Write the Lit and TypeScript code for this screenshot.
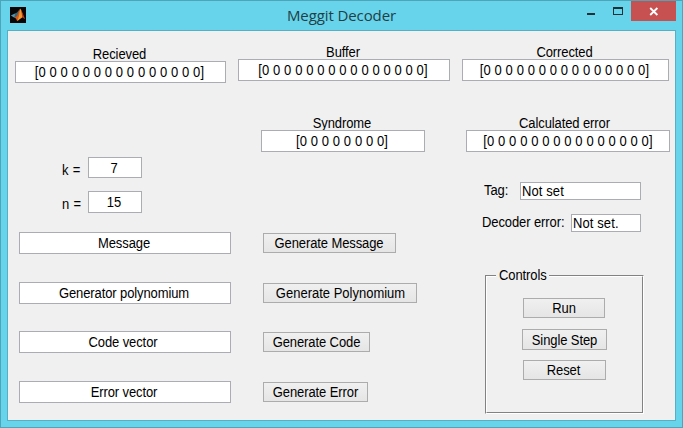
import { LitElement, html, css } from "lit";
import { customElement } from "lit/decorators.js";

const zeros = (n: number) => `[${Array(n).fill("0").join(" ")}]`;
const text = (t: string) => html`<span class="t">${t}</span>`;

@customElement("app-root")
export class AppRoot extends LitElement {
  static styles = css`
    * { box-sizing: border-box; }
    :host {
      box-sizing: border-box;
      display: flex;
      flex-direction: column;
      width: 683px;
      height: 428px;
      border: 1px solid #4fa5b8;
      background: #67d4eb;
      font: 13px/16px "Liberation Sans", Arial, sans-serif;
      letter-spacing: -0.1px;
      color: #000;
      overflow: hidden;
    }
    .t {
      display: inline-block;
      white-space: pre;
      transform: translate(-1px, 1px) scaleY(1.08);
      transform-origin: 50% 12px;
    }
    .titlebar {
      display: grid;
      grid-template-columns: 120px 1fr 120px;
      height: 29px;
      flex: none;
    }
    .logo { margin: 6px 0 0 9px; width: 16px; height: 16px; display: block; }
    .title {
      text-align: center;
      font: 15px/20px "Open Sans", "Noto Sans", sans-serif;
      letter-spacing: -0.1px;
      color: #223f46;
      padding-top: 4px;
    }
    .caption { display: flex; justify-content: flex-end; padding-right: 6px; }
    .caption svg { display: block; flex: none; }
    .client {
      display: flex;
      width: 669px;
      height: 391px;
      margin-left: 6px;
      flex: none;
      border: 1px solid #55b0c3;
      background: #f0f0f0;
    }
    .col { display: flex; flex-direction: column; align-items: flex-start; flex: none; }
    .left { width: 230px; padding: 15px 0 0 7px; }
    .middle { width: 223px; padding-top: 13px; }
    .right { width: 214px; padding: 13px 0 0 1px; }
    .edit {
      display: flex;
      justify-content: center;
      align-items: center;
      height: 22px;
      background: #fff;
      border: 1px solid #abadb3;
      white-space: pre;
      flex: none;
    }
    .bits { letter-spacing: 0.1px; }
    .label { height: 15px; text-align: center; white-space: pre; overflow: hidden; }
    .w211 { width: 211px; }
    .w212 { width: 212px; }
    .w207 { width: 207px; }
    .w204 { width: 204px; }
    .w164 { width: 164px; }
    .w199 { width: 199px; }
    .w54 { width: 54px; }
    .param { display: flex; margin-left: 47px; }
    .param .name { width: 26px; padding: 5px 0 0 1px; white-space: pre; letter-spacing: 0.3px; }
    .k { margin-top: 74px; }
    .k .edit { height: 21px; }
    .n { margin-top: 13px; }
    .vectors { display: flex; flex-direction: column; margin: 19px 0 0 4px; }
    .vectors .edit:nth-child(2) { margin-top: 28px; }
    .vectors .edit:nth-child(3) { margin-top: 27px; padding-right: 2px; }
    .vectors .edit:nth-child(4) { margin-top: 28px; }
    .syndrome { margin: 34px 0 0 23px; }
    .calculated { margin: 34px 0 0 4px; }
    .calculated .edit { padding-left: 2px; }
    button {
      display: flex;
      align-items: center;
      justify-content: center;
      height: 20px;
      padding: 0 0 0 1px;
      margin: 0;
      border: 1px solid #acacac;
      border-radius: 0;
      background: linear-gradient(#f0f0f0, #e5e5e5);
      font: inherit;
      letter-spacing: inherit;
      color: inherit;
      white-space: pre;
    }
    .generators { display: flex; flex-direction: column; margin: 80px 0 0 25px; }
    .gm { width: 133px; margin-top: 1px; }
    .gp { width: 154px; margin-top: 30px; padding-left: 3px; letter-spacing: 0; }
    .gc { width: 107px; margin-top: 29px; padding-left: 2px; }
    .ge { width: 105px; margin-top: 30px; padding-left: 2px; }
    .status { display: flex; justify-content: space-between; }
    .status .edit { height: 18px; justify-content: flex-start; padding-left: 2px; }
    .status .edit .t { letter-spacing: 0.1px; }
    .tag { width: 158px; margin: 30px 0 0 21px; padding-left: 2px; }
    .tag .edit { width: 121px; }
    .error { width: 160px; margin: 14px 0 0 19px; padding-left: 2px; }
    .error .edit { width: 70px; }
    .panel {
      display: flex;
      flex-direction: column;
      width: 159px;
      height: 139px;
      margin: 43px 0 0 23px;
      border: 1px solid #828282;
      border-right-color: #fff;
      border-bottom-color: #fff;
    }
    .inner {
      display: flex;
      flex-direction: column;
      align-items: flex-start;
      flex: 1;
      border: 1px solid #fff;
      border-right-color: #828282;
      border-bottom-color: #828282;
    }
    .legend {
      height: 16px;
      width: 53px;
      margin: -10px 0 0 9px;
      padding-left: 4px;
      background: #f0f0f0;
    }
    .run { width: 82px; margin: 15px 0 0 36px; padding-left: 2px; }
    .step { width: 85px; height: 21px; margin: 11px 0 0 35px; padding-left: 2px; }
    .reset { width: 83px; margin: 10px 0 0 36px; padding: 0; }
  `;

  render() {
    return html`
      <div class="titlebar">
        <svg class="logo" viewBox="0 0 16 16">
          <rect width="16" height="16" fill="#080606" />
          <path d="M0.8 8.6 5 6.4 7 8.5 4.4 10.8Z" fill="#5298b4" />
          <path d="M5 6.4 7 5.6 10 1.8 8.5 7.5 6 10.5 4.4 10Z" fill="#3c6673" />
          <path d="M4.4 10.8 7 9 10.2 1.6 10.5 8 7.2 14.2 6 11.4Z" fill="#d8581a" />
          <path d="M10.2 1.6 11.6 4 13.2 9.5 12.2 10.6 10 12 7.2 14.2 9 9Z" fill="#f29a30" />
          <path d="M11 2.6 12.6 6 15.2 12.2 12.4 10.4Z" fill="#b03a16" />
        </svg>
        <div class="title">Meggit Decoder</div>
        <div class="caption">
          <svg width="93" height="20" viewBox="0 0 93 20" shape-rendering="crispEdges">
            <rect x="4" y="12" width="8" height="2" fill="#1d3136" />
            <path d="M30 6H40V14H30Z M31 8V13H39V8Z" fill="#1d3136" fill-rule="evenodd" />
            <rect x="48" width="45" height="20" fill="#c75050" />
            <path d="M67.2 7 74.4 14M74.4 7 67.2 14" stroke="#fff" stroke-width="1.8" shape-rendering="auto" />
          </svg>
        </div>
      </div>
      <div class="client">
        <div class="col left">
          <div>
            <div class="label w211">${text("Recieved")}</div>
            <div class="edit bits w211">${text(zeros(15))}</div>
          </div>
          <div class="param k"><span class="name">${text("k =")}</span><div class="edit w54">${text("7")}</div></div>
          <div class="param n"><span class="name">${text("n =")}</span><div class="edit w54">${text("15")}</div></div>
          <div class="vectors">
            ${["Message", "Generator polynomium", "Code vector", "Error vector"].map(
              (t) => html`<div class="edit w212">${text(t)}</div>`
            )}
          </div>
        </div>
        <div class="col middle">
          <div>
            <div class="label w212">${text("Buffer")}</div>
            <div class="edit bits w212">${text(zeros(15))}</div>
          </div>
          <div class="syndrome">
            <div class="label w164">${text("Syndrome")}</div>
            <div class="edit bits w164">${text(zeros(8))}</div>
          </div>
          <div class="generators">
            <button class="gm">${text("Generate Message")}</button>
            <button class="gp">${text("Generate Polynomium")}</button>
            <button class="gc">${text("Generate Code")}</button>
            <button class="ge">${text("Generate Error")}</button>
          </div>
        </div>
        <div class="col right">
          <div>
            <div class="label w207">${text("Corrected")}</div>
            <div class="edit bits w207">${text(zeros(15))}</div>
          </div>
          <div class="calculated">
            <div class="label w199">${text("Calculated error")}</div>
            <div class="edit bits w204">${text(zeros(15))}</div>
          </div>
          <div class="status tag">${text("Tag:")}<div class="edit">${text("Not set")}</div></div>
          <div class="status error">${text("Decoder error:")}<div class="edit">${text("Not set.")}</div></div>
          <div class="panel">
            <div class="inner">
              <div class="legend">${text("Controls")}</div>
              <button class="run">${text("Run")}</button>
              <button class="step">${text("Single Step")}</button>
              <button class="reset">${text("Reset")}</button>
            </div>
          </div>
        </div>
      </div>
    `;
  }
}
